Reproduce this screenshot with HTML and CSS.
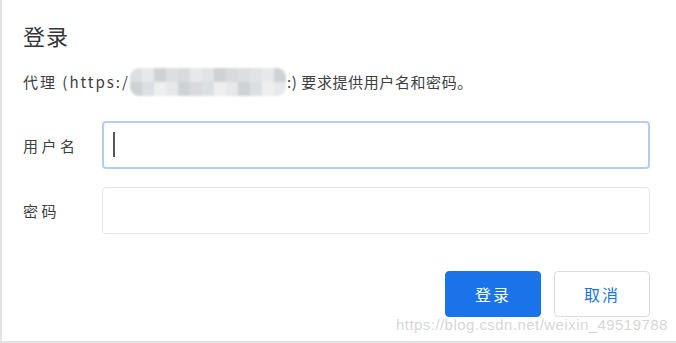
FILE: index.html
```html
<!DOCTYPE html>
<html>
<head>
  <title>登录</title>
  <link rel="stylesheet" href="styles.css">
</head>
<body>
  <div class="dialog">
    <h1 class="title">登录</h1>
    <p class="desc"><span class="head">代理 (https:/</span><span class="mosaic">
        <i class="c1"></i><i class="c2"></i><i class="c3"></i><i class="c1"></i><i class="c4"></i><i class="c2"></i><i class="c5"></i><i class="c3"></i><i class="c4"></i><i class="c1"></i><i class="c5"></i><i class="c2"></i><i class="c3"></i>
        <i class="c3"></i><i class="c1"></i><i class="c6"></i><i class="c2"></i><i class="c3"></i><i class="c4"></i><i class="c1"></i><i class="c6"></i><i class="c2"></i><i class="c3"></i><i class="c1"></i><i class="c6"></i><i class="c2"></i>
      </span><span class="tail">:) 要求提供用户名和密码。</span></p>

    <form class="form">
      <div class="row">
        <label for="username">用户名</label>
        <div class="field-wrap">
          <input type="text" id="username" class="field focused" />
          <span class="caret"></span>
        </div>
      </div>
      <div class="row">
        <label for="password">密码</label>
        <div class="field-wrap">
          <input type="password" id="password" class="field" />
        </div>
      </div>
      <div class="actions">
        <button type="submit" class="btn primary">登录</button>
        <button type="button" class="btn">取消</button>
      </div>
    </form>

    <div class="watermark">https://blog.csdn.net/weixin_49519788</div>
  </div>
</body>
</html>
```

FILE: styles.css
```css
body {
  margin: 0;
  font-family: "Noto Sans CJK SC", "Liberation Sans", sans-serif;
  background: #fff;
}

.dialog {
  position: relative;
  width: 671px;
  height: 341px;
  border-left: 2px solid #e2e2e2;
  border-right: 2px solid #dcdcdc;
  border-bottom: 2px solid #e2e2e2;
  padding-left: 21px;
  background: #fff;
  overflow: hidden;
}

.title {
  margin: 0;
  padding-top: 20px;
  font-size: 22px;
  font-weight: normal;
  line-height: 30px;
  letter-spacing: 1px;
  color: #333639;
}

.desc {
  margin: 18px 0 0;
  font-size: 15px;
  line-height: 26px;
  color: #3c4043;
  display: flex;
  align-items: center;
  white-space: nowrap;
}

.desc .head { letter-spacing: 2px; }
.desc .tail { letter-spacing: 0.6px; }

.mosaic {
  display: inline-grid;
  grid-template-columns: repeat(13, 12px);
  grid-template-rows: 14px 14px;
  width: 156px;
  margin: 0 1px 0 0;
  border-radius: 9px;
  overflow: hidden;
  filter: blur(1px);
}

.mosaic i { display: block; }
.c1 { background: #dcdfe2; }
.c2 { background: #e6e8ea; }
.c3 { background: #cfd2d4; }
.c4 { background: #d8dadd; }
.c5 { background: #e1e3e6; }
.c6 { background: #eef0ef; }

.form {
  margin-top: 25px;
  width: 627px;
}

.row {
  display: flex;
  align-items: center;
  margin-bottom: 18px;
}

.row label {
  width: 79px;
  flex: none;
  font-size: 15px;
  letter-spacing: 3.5px;
  color: #3c4043;
}

.field-wrap {
  position: relative;
  flex: 1;
  display: flex;
}

.field {
  flex: 1;
  height: 47px;
  box-sizing: border-box;
  border: 1px solid #e6e6e6;
  border-radius: 4px;
  padding: 0 10px;
  font-size: 16px;
  outline: none;
  background: #fff;
}

.field.focused {
  height: 48px;
  border: 2px solid #b2cdf5;
}

.caret {
  position: absolute;
  left: 11px;
  top: 11px;
  width: 2px;
  height: 25px;
  background: #555;
}

.actions {
  display: flex;
  justify-content: flex-end;
  gap: 13px;
  margin-top: 37px;
}

.btn {
  width: 96px;
  height: 46px;
  border: 1px solid #dadce0;
  border-radius: 4px;
  background: #fff;
  color: #1a73e8;
  font-family: "Noto Sans CJK SC", "Liberation Sans", sans-serif;
  font-size: 16px;
  letter-spacing: 2px;
  cursor: pointer;
}

.btn.primary {
  background: #1a73e8;
  border-color: #1a73e8;
  color: #fff;
}

.watermark {
  position: absolute;
  left: 394px;
  top: 316px;
  font-family: "Liberation Sans", Arial, sans-serif;
  font-size: 15px;
  letter-spacing: 0.45px;
  color: rgba(200, 200, 200, 0.75);
  text-shadow: 0 1px 0 rgba(255, 255, 255, 0.6);
}
```
